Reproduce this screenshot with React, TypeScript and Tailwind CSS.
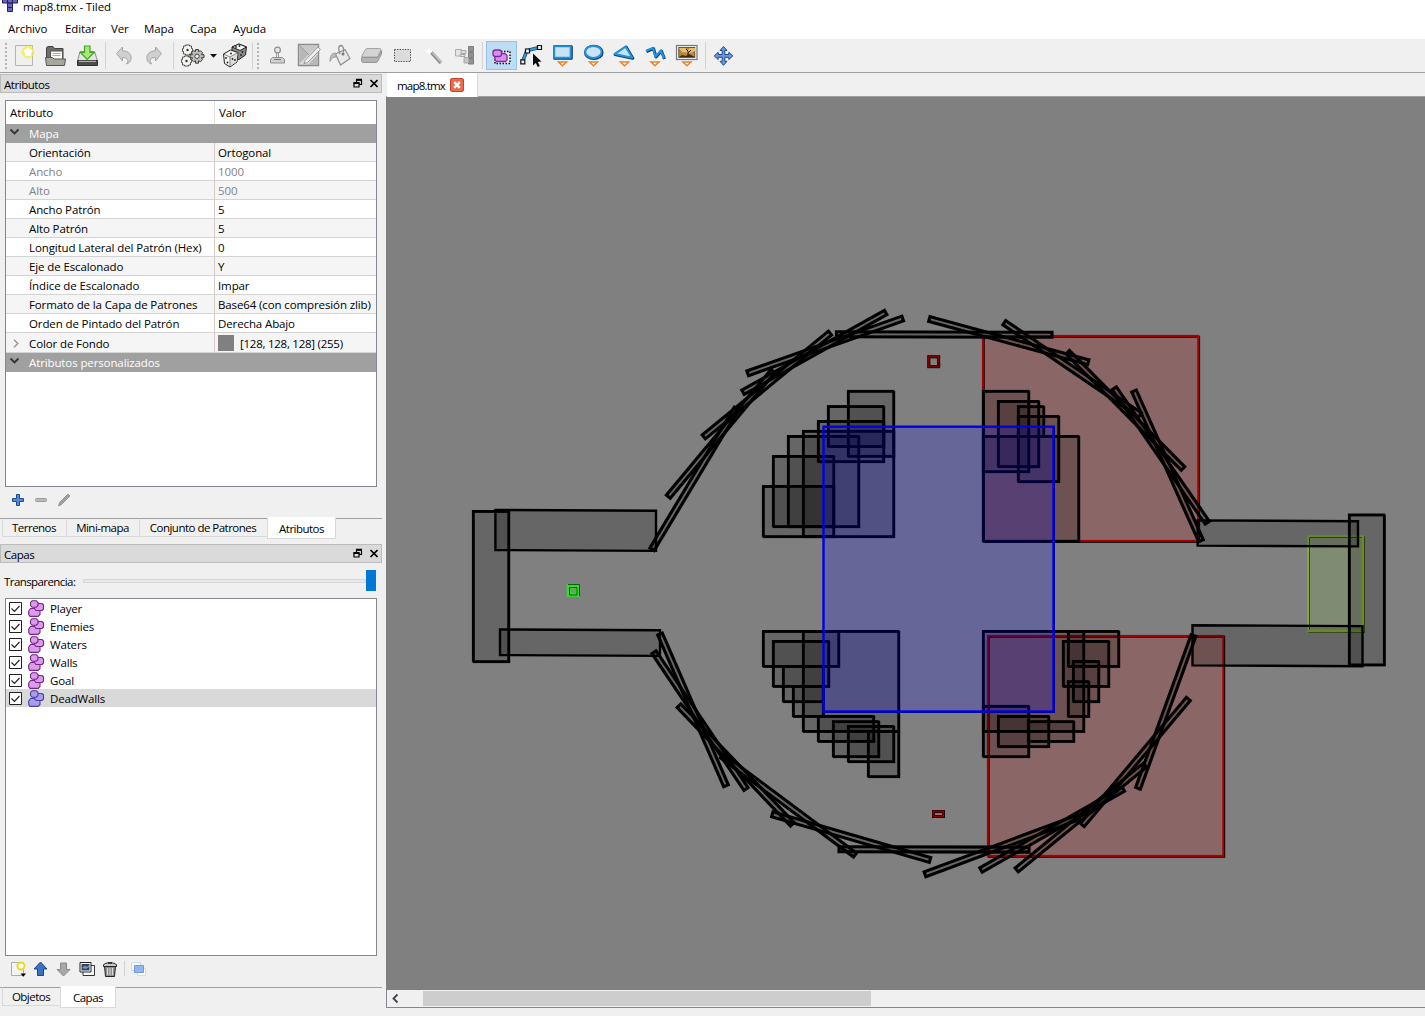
import React from "react";

type Kids = { children?: React.ReactNode };

/* ---------- toolbar icons ---------- */

const Icon = ({ ml, children }: Kids & { ml: string }) => (
  <svg className={`${ml} block h-[27px] w-[26px] shrink-0`} viewBox="0 0 26 27" fill="none">
    {children}
  </svg>
);

const Sep = ({ ml }: { ml: string }) => <div className={`${ml} h-[27px] w-px shrink-0 bg-[#d2d2d2]`} />;

const Grip = ({ ml }: { ml: string }) => (
  <svg className={`${ml} block h-[27px] w-[3px] shrink-0`} viewBox="0 0 3 27">
    {[1, 5, 9, 13, 17, 21, 25].map((y) => (
      <rect key={y} x="0" y={y} width="2" height="2" fill="#b4b4b4" />
    ))}
  </svg>
);

const Down = () => <path d="M9.500 20h8l-4 3.800z" fill="#fff" stroke="#e8832c" strokeWidth="1.500" />;

const Dot = ({ x, y }: { x: number; y: number }) => <circle cx={x} cy={y} r="0.9" fill="#222" />;

function Toolbar() {
  return (
    <div className="flex h-[34px] shrink-0 items-start border-b border-[#a0a0a0] bg-[#f0f0f0] pt-[3px]">
      <Grip ml="ml-[5px]" />
      <Icon ml="ml-[3px]">
        <path d="M4.500 3.500h17v20h-17z" fill="#f0f0ec" stroke="#b4b4b4" />
        <circle cx="17" cy="10" r="6.300" fill="#f3ee3c" opacity=".75" />
        <circle cx="17" cy="10" r="3.600" fill="#fff" />
        <path d="M17 5.500l1.400 2.800 3 .5-2.200 2.200.5 3-2.700-1.300-2.700 1.300.5-3-2.200-2.200 3-.5z" fill="#fff" stroke="#fff" strokeLinejoin="round" />
      </Icon>
      <Icon ml="ml-[6px]">
        <path d="M3.500 19V5.500l1.500-1h5l1.500 2h8.500V19z" fill="#6d6f68" stroke="#43453f" />
        <path d="M7.500 9h12v9h-12z" fill="#fafafa" stroke="#555" />
        <path d="M9.500 11.500h8M9.500 13.500h8" stroke="#aaa" />
        <path d="M2.500 15.500h7l1.500 1.500h11.500l-1 6.500h-18z" fill="#a5a89a" stroke="#55574f" />
      </Icon>
      <Icon ml="ml-[5px]">
        <path d="M6 9.500h14.500l3 9.500h-20z" fill="#e4e4e4" stroke="#8b8b8b" />
        <path d="M3.500 18.500h20v5h-20z" fill="#4c4e4c" stroke="#303030" />
        <path d="M5 19.300h17" stroke="#c8c8c8" />
        <path d="M10.500 4h5.500v6.500h4l-6.800 7-6.700-7h4z" fill="#a6e876" stroke="#45a322" strokeWidth="1.200" />
      </Icon>
      <Sep ml="ml-[5px]" />
      <Icon ml="ml-[5px]">
        <path d="M5.500 11.500l6-6.500v3.800c6 0 9.500 4 8.500 8.500-.6 2.300-2 4-4.500 4.700 2.500-3.500 1.500-6.500-4-6.500v3.500z" fill="#d0d0d0" stroke="#a4a4a4" />
      </Icon>
      <Icon ml="ml-[3px]">
        <path d="M21.500 11.500l-6-6.500v3.800c-6 0-9.500 4-8.500 8.500.6 2.300 2 4 4.500 4.700-2.500-3.500-1.500-6.500 4-6.500v3.500z" fill="#d0d0d0" stroke="#a4a4a4" />
      </Icon>
      <Sep ml="ml-[7px]" />
      <Icon ml="ml-[6px]">
        <path d="M3.500 4h2V3h4v1h2v2.500h1v3h-1V12h-2v1h-4v-1h-2V9.500h-1v-3h1z" fill="#f4f4f0" stroke="#444" strokeWidth=".9" />
        <path d="M2.500 15h2v-1h4v1h2v2.500h1v3h-1V23h-2v1h-4v-1h-2v-2.500h-1v-3h1z" fill="#f4f4f0" stroke="#444" strokeWidth=".9" />
        <path d="M15.500 7.500h3v2l2-.8 2 2-1 2h2.500v3h-2.500l1 2-2 2-2-.8v2.300h-3v-2.300l-2 .8-2-2 1-2H10v-3h2.500l-1-2 2-2 2 .8z" fill="#bdbeb7" stroke="#3c3c3c" />
        <circle cx="17" cy="14.300" r="2.200" fill="#f0f0f0" stroke="#444" />
        <circle cx="7.500" cy="8" r="1.200" fill="#333" />
        <circle cx="6.500" cy="19" r="1.200" fill="#333" />
      </Icon>
      <svg className="ml-[4px] block h-[27px] w-[7px] shrink-0" viewBox="0 0 7 27">
        <path d="M0 12h7l-3.500 3.800z" fill="#111" />
      </svg>
      <Icon ml="ml-[5px]">
        <path d="M10 5l7-3 7.500 3-1 8-6.500 4.500-7-3z" fill="#888c88" stroke="#222" />
        <path d="M10 5l7-3 7.500 3-6.500 3.500z" fill="#f5f5f2" stroke="#222" />
        <path d="M1.500 12l7-4 7.500 2.500-1 9.500-7 5-5.500-3.500z" fill="#f5f5f2" stroke="#222" />
        <path d="M8.500 15.500l7-4-.7 8-6.300 4.500z" fill="#dcddd8" />
        <path d="M1.500 12l6.500 3 8-4.500M8 15v9.500" stroke="#555" strokeWidth=".7" />
        <Dot x={14} y={5} /><Dot x={17.500} y={4} /><Dot x={20.500} y={10} /><Dot x={19} y={13} />
        <Dot x={9} y={11.500} /><Dot x={4} y={16} /><Dot x={5.500} y={20.500} /><Dot x={10.500} y={17} /><Dot x={13} y={18} />
      </Icon>
      <Sep ml="ml-[4px]" />
      <Grip ml="ml-[4px]" />
      <Icon ml="ml-[4px]">
        <circle cx="13.500" cy="8" r="2.900" fill="#e6e6e6" stroke="#8f8f8f" strokeWidth="1.200" />
        <path d="M12.500 11v4M14.500 11v4" stroke="#999" />
        <path d="M8.500 15.500h10l2 2v3.500h-14v-3.500z" fill="#cfcfcf" stroke="#8f8f8f" />
        <path d="M10 17.500h7" stroke="#777" />
      </Icon>
      <Icon ml="ml-[6px]">
        <path d="M2.500 2.500h20v21h-20z" fill="#dadada" stroke="#8b8b8b" strokeWidth="1.400" />
        <path d="M3.500 3.500l9 9-9 9zM22 12v11H12z" fill="#b8b8b8" />
        <path d="M4 4h18l-9.500 9z" fill="#c8c8c8" />
        <path d="M3.500 3.500l9.500 9.500" stroke="#999" />
        <path d="M9 18.500l13-13.500 2.500 2.500L11.500 20.500l-3.500 1.200z" fill="#f0f0f0" stroke="#999" />
      </Icon>
      <Icon ml="ml-[5px]">
        <path d="M8.500 12l9.500-4.500 5 9-9.500 6.500z" fill="#e9e9e9" stroke="#909090" strokeWidth="1.200" />
        <path d="M13 12c-2-5-1.500-8.500 1-8.500s2.800 4 2.500 7" stroke="#8c8c8c" strokeWidth="1.300" />
        <circle cx="16" cy="12" r="1.500" fill="#777" />
        <path d="M8.500 11c-4 0-5.500 3-5.500 8.500l2.500-4 3.500-.5z" fill="#bcbcbc" stroke="#a0a0a0" />
      </Icon>
      <Icon ml="ml-[5px]">
        <path d="M9 6.500h12.500q2 0 1.200 1.800l-3 6.700h-14.200q-2-.2-1.200-1.700l2.700-5q1-1.800 2-1.800z" fill="#d4d4d4" stroke="#a5a5a5" />
        <path d="M4 14.500l-.4 3.500q0 2.500 1.500 2.500h12.500q1.500 0 2.300-1.500l3.600-7 .1-3.500-3.800 7h-14.300q-1.500 0-1.500-1z" fill="#b4b4b4" stroke="#949494" />
      </Icon>
      <Icon ml="ml-[5px]">
        <rect x="5.500" y="7.500" width="16" height="12" fill="#dcdcdc" stroke="#444" strokeDasharray="1.300 1.300" />
      </Icon>
      <Icon ml="ml-[7px]">
        <path d="M9.500 10.500l9.500 10.500" stroke="#8f8f8f" strokeWidth="3.400" />
        <path d="M10.500 10.500l9 10" stroke="#c8c8c8" strokeWidth="1.400" />
        <path d="M7 6v6M4 9h6" stroke="#fff" strokeWidth="1.500" />
      </Icon>
      <Icon ml="ml-[3px]">
        <path d="M4.500 7.500h6v6.500h-6z" fill="#e5e5e5" stroke="#aaa" />
        <path d="M10 8.500h5v3h-5zM9 12.500h5v2H9z" fill="#ddd" stroke="#a8a8a8" />
        <path d="M17.500 4.500h5v5h-5zM17.500 10.500h5v5h-5zM17.500 16.500h5v5.500h-5z" fill="#929292" stroke="#7d7d7d" />
        <path d="M13 15.500h4.500v5.500H13z" fill="#c5c5c5" stroke="#aaa" />
      </Icon>
      <Sep ml="ml-[5px]" />
      <div className="-mt-[1px] ml-[3px] flex h-[29px] w-[31px] shrink-0 border border-[#93c3ea] bg-[#bfdcf5] pt-px">
        <Icon ml="ml-[2px]">
          <rect x="6" y="8.500" width="15" height="12" fill="#e4eefa" stroke="#111" strokeDasharray="1.500 1.500" strokeWidth="1.500" />
          <path d="M11 10.500h5l2 2v4.500l-1.500 1.500h-9L6 17v-3.500z" fill="#dc8ef0" stroke="#7c2c96" strokeWidth="1.300" strokeLinejoin="round" />
          <rect x="4" y="7" width="8.500" height="6.500" rx="2.500" fill="#dc8ef0" stroke="#7c2c96" strokeWidth="1.300" />
        </Icon>
      </div>
      <Icon ml="ml-px">
        <path d="M4.500 19.500L9 8.500l12.500-3" stroke="#174d7c" strokeWidth="3.400" />
        <path d="M4.500 19.500L9 8.500l12.500-3" stroke="#2e9fe0" strokeWidth="1.800" />
        <path d="M2.800 17.800h4v4h-4zM7.500 7h4v4h-4zM19.500 3.500h4v4h-4z" fill="#eee" stroke="#111" strokeWidth="1.200" />
        <path d="M15 11.500v12l2.800-2.500 2 4 2-1-2-4 3.700-.5z" fill="#0b0b0b" />
      </Icon>
      <Icon ml="ml-[5px]">
        <rect x="5.700" y="4.700" width="16.500" height="11.500" stroke="#0b3760" strokeWidth="3.200" strokeLinejoin="round" />
        <rect x="5.200" y="4.200" width="16.500" height="11.500" fill="#c9e2f5" stroke="#1f93dc" strokeWidth="2" strokeLinejoin="round" />
        <Down />
      </Icon>
      <Icon ml="ml-[6px]">
        <ellipse cx="12.800" cy="10.400" rx="8.200" ry="6" stroke="#0b3760" strokeWidth="3.200" />
        <ellipse cx="12.400" cy="9.900" rx="8.200" ry="6" fill="#c9e2f5" stroke="#1f93dc" strokeWidth="2" />
        <g transform="translate(-1 0)"><Down /></g>
      </Icon>
      <Icon ml="ml-[4px]">
        <path d="M15.200 5.200l6.500 11-17.500-3.700z" stroke="#0b3760" strokeWidth="3.200" strokeLinejoin="round" />
        <path d="M14.700 4.700l6.500 11-17.500-3.700z" fill="#c9e2f5" stroke="#1f93dc" strokeWidth="2" strokeLinejoin="round" />
        <Down />
      </Icon>
      <Icon ml="ml-[6px]">
        <path d="M3.500 9.500l7-3 2.500 8.500 5.500-6 3 8" stroke="#0b3760" strokeWidth="3" strokeLinejoin="round" />
        <path d="M3 9l7-3 2.500 8.500 5.500-6 3 8" stroke="#1f93dc" strokeWidth="2.200" strokeLinejoin="round" />
        <g transform="translate(-1.500 0)"><Down /></g>
      </Icon>
      <Icon ml="ml-[5px]">
        <rect x="2.500" y="3.500" width="20.500" height="14" fill="#f2f2f2" stroke="#777" strokeWidth="1.200" />
        <rect x="4.800" y="5.500" width="16" height="10" fill="#b98b36" stroke="#444" strokeWidth=".8" />
        <path d="M5 15l3-2 4 1 3-2 6 3z" fill="#3b2c12" />
        <path d="M5 6h6l2 3 3-3h5v3l-5 2-8-1z" fill="#e8c069" />
        <path d="M14 15V9l-2-2M14 11l3-3" stroke="#2b200e" />
        <g transform="translate(-.5 0)"><Down /></g>
      </Icon>
      <Sep ml="ml-[5px]" />
      <Icon ml="ml-[4px]">
        <path d="M13.500 4.500l3.500 4h-2.200v4h4V10.300l4 3.600-4 3.600v-2.200h-4v4H17l-3.500 4-3.500-4h2.200v-4h-4v2.200l-4-3.600 4-3.600v2.200h4v-4H10z" fill="#6c9ad8" stroke="#1d4689" />
      </Icon>
    </div>
  );
}

/* ---------- docks ---------- */

const DockTitle = ({ children }: Kids) => (
  <div className="flex h-[19px] w-[382px] shrink-0 items-center border border-[#bcbcbc] bg-[#dadada] pl-[3px]">
    <span className="grow pt-[2px] tracking-[-0.040em]">{children}</span>
    <svg className="h-[17px] w-[28px]" viewBox="0 0 28 17" fill="none" stroke="#000">
      <path d="M4 8h5v4h-5zM6.500 7.500V5h5v4.500H9.500" strokeWidth="1.200" />
      <path d="M6 4.800h6M3.500 8h6" strokeWidth="1.900" />
      <path d="M20.500 5l7 7M27.500 5l-7 7" strokeWidth="1.700" />
    </svg>
    <span className="w-[3px]" />
  </div>
);

const rows: { name: string; value: string; off?: boolean }[] = [
  { name: "Orientación", value: "Ortogonal" },
  { name: "Ancho", value: "1000", off: true },
  { name: "Alto", value: "500", off: true },
  { name: "Ancho Patrón", value: "5" },
  { name: "Alto Patrón", value: "5" },
  { name: "Longitud Lateral del Patrón (Hex)", value: "0" },
  { name: "Eje de Escalonado", value: "Y" },
  { name: "Índice de Escalonado", value: "Impar" },
  { name: "Formato de la Capa de Patrones", value: "Base64 (con compresión zlib)" },
  { name: "Orden de Pintado del Patrón", value: "Derecha Abajo" },
];

const Group = ({ children }: Kids) => (
  <div className="flex h-[19px] items-center bg-[#a0a0a0] text-white">
    <svg className="mb-[3px] ml-[3px] h-[8px] w-[11px]" viewBox="0 0 11 8" fill="none" stroke="#333" strokeWidth="1.800">
      <path d="M1.500 1.500l4 4 4-4" />
    </svg>
    <span className="ml-[9px]">{children}</span>
  </div>
);

function Attributes() {
  return (
    <div className="ml-[5px] mt-[7px] h-[387px] w-[372px] shrink-0 border border-[#828790] bg-white">
      <div className="flex h-[23px] items-center">
        <span className="w-[208px] pl-[4px]">Atributo</span>
        <span className="flex h-full items-center border-l border-[#e2e2e2] pl-[4px]">Valor</span>
      </div>
      <Group>Mapa</Group>
      {rows.map((r, i) => (
        <div
          key={r.name}
          className={`flex h-[19px] border-b border-[#d4d4d4] ${i % 2 === 0 ? "bg-[#f5f5f5]" : "bg-white"} ${r.off ? "text-[#838383]" : "text-black"}`}
        >
          <span className="flex w-[209px] shrink-0 items-center whitespace-nowrap border-r border-[#d4c8c8] pl-[23px] pt-[2px]">{r.name}</span>
          <span className="flex items-center whitespace-nowrap pl-[3px] pt-[2px]">{r.value}</span>
        </div>
      ))}
      <div className="flex h-[20px] border-b border-[#d4d4d4] bg-[#f5f5f5]">
        <span className="flex w-[209px] shrink-0 items-center border-r border-[#d4c8c8] pt-[2px]">
          <svg className="ml-[6px] mr-[9px] h-[9px] w-[8px]" viewBox="0 0 8 9" fill="none" stroke="#999" strokeWidth="1.500">
            <path d="M2 .8l3.800 3.700L2 8.200" />
          </svg>
          Color de Fondo
        </span>
        <span className="flex items-center pl-[3px]">
          <span className="mr-[6px] h-[16px] w-[16px] bg-[#808080]" />
          <span className="pt-[2px] tracking-[-0.022em]">[128, 128, 128] (255)</span>
        </span>
      </div>
      <Group>Atributos personalizados</Group>
    </div>
  );
}

const Tab = ({ on, w, children }: Kids & { on?: boolean; w: string }) => (
  <div
    className={`${w} shrink-0 whitespace-nowrap border text-center tracking-[-0.045em] ${
      on ? "-mt-px h-[22px] border-[#d9d9d9] border-t-white bg-white leading-[22px]" : "h-[19px] border-l-[#d9d9d9] border-b-[#d9d9d9] border-r-transparent border-t-[#a0a0a0] leading-[18px]"
    }`}
  >
    {children}
  </div>
);

const Blobs = ({ fill, line }: { fill: string; line: string }) => (
  <svg className="ml-[6px] h-[17px] w-[17px]" viewBox="0 0 17 17" fill={fill} stroke={line} strokeWidth="1.100" strokeLinejoin="round">
    <path d="M9.500 3.500h4.500l1.500 1.500v4l-1.500 1.500H7.500L6.300 9.500V6.500z" />
    <path d="M2.500 8.500h4l1.500 2h4v4l-1.800 1.900H2L.700 14.500V11z" />
    <path d="M4 .8h4.500l1.500 1.500v3.200L8.300 7.200H4L2.500 5.500v-3z" />
  </svg>
);

const layers = ["Player", "Enemies", "Waters", "Walls", "Goal", "DeadWalls"];

function Layers() {
  return (
    <div className="ml-[5px] h-[358px] w-[372px] shrink-0 border border-[#828790] bg-white">
      {layers.map((l) => (
        <div key={l} className={`flex h-[18px] items-center ${l === "DeadWalls" ? "bg-[#d9d9d9]" : ""}`}>
          <svg className="ml-[3px] h-[13px] w-[13px]" viewBox="0 0 13 13" fill="#fff" stroke="#222">
            <path d="M.5.500h12v12H.500z" />
            <path d="M2.500 6.500l3 3 5-5.500" fill="none" strokeWidth="1.200" />
          </svg>
          {l === "DeadWalls" ? <Blobs fill="#a99bf0" line="#4b3f9a" /> : <Blobs fill="#df98ee" line="#702a80" />}
          <span className="ml-[5px] pt-px tracking-[-0.015em]">{l}</span>
        </div>
      ))}
    </div>
  );
}

function LayerTools() {
  return (
    <div className="flex h-[31px] shrink-0 items-start pl-[10px] pt-[4px]">
      <svg className="h-[18px] w-[137px]" viewBox="0 0 137 18" fill="none">
        <path d="M1.500 2.500h12v13h-12z" fill="#f4f4f0" stroke="#aaa" />
        <circle cx="11" cy="6" r="3.500" fill="#fff" stroke="#ecdc20" strokeWidth="2" />
        <path d="M10.500 13.500h5.500l-2.700 3.200z" fill="#000" />
        <path d="M30.500 2l6.500 7h-3.500v6.500h-6V9H24z" fill="#3a72c0" stroke="#1e4687" />
        <path d="M53.500 16L47 9.500h3.500V3h6v6.500H60z" fill="#a8a8a8" stroke="#8a8a8a" />
        <path d="M73 5.500h11.500v10H73z" fill="#fff" stroke="#333" />
        <path d="M70 2.500h11v9.500H70z" fill="#fff" stroke="#222" />
        <path d="M71.500 4h8v6.500h-8z" fill="#2e4560" />
        <path d="M72 8l3-2.500 2 1.500 2-2v2l-3 2z" fill="#7e9abb" />
        <path d="M94.500 6h11l-1 10.500h-9z" fill="#8d918c" stroke="#222" />
        <path d="M97.500 8v7M100 8v7M102.500 8v7" stroke="#ddd" />
        <path d="M93.500 5c1-3 12-3 13 0v1.500h-13z" fill="#c8cac6" stroke="#222" />
        <path d="M98 3h4" stroke="#222" strokeWidth="1.500" />
        <path d="M114.500 1v15" stroke="#d0d0d0" />
        <path d="M121.500 2.500h9v8h-9z" fill="#fff" stroke="#cfdcf0" />
        <path d="M127.500 8.500h8v7h-8z" fill="#fff" stroke="#cfdcf0" />
        <path d="M124.500 5.500h9v7h-9z" fill="#8fb6ee" stroke="#6d9be0" />
      </svg>
    </div>
  );
}

/* ---------- map ---------- */

type Box = [number, number, number, number];

const waters: Box[] = [
  [983.3, 336.3, 1198.6, 541.3],
  [988.3, 636.3, 1223.7, 856.3],
];

const walls: Box[] = [
  [848.3, 391.3, 893.7, 456.3], [828.3, 406.5, 883.7, 446.5], [818.3, 421.4, 883.7, 461.6],
  [803.3, 431.3, 893.7, 536.6], [788.3, 436.4, 858.7, 526.6], [773.3, 456.4, 833.7, 526.6],
  [763.3, 486.4, 833.7, 536.6],
  [983.3, 391.3, 1028.7, 471.6], [998.3, 401.4, 1038.7, 466.6], [1018.3, 406.6, 1043.7, 436.4],
  [1018.3, 416.4, 1058.7, 481.6], [983.3, 436.4, 1078.7, 541.3],
  [763.3, 631.4, 838.7, 666.4], [773.3, 641.4, 828.7, 686.4], [783.3, 666.4, 823.3, 701.6],
  [793.3, 686.4, 823.3, 716.4], [803.3, 631.4, 898.7, 731.4], [818.3, 716.4, 873.7, 741.4],
  [833.3, 721.6, 878.7, 756.6], [848.3, 726.4, 893.7, 761.6], [868.3, 731.4, 898.7, 776.6],
  [983.3, 631.4, 1083.7, 731.4], [1068.3, 631.4, 1118.7, 666.4], [1063.3, 641.4, 1108.7, 686.4],
  [1073.3, 661.4, 1098.7, 701.6], [1068.3, 681.6, 1088.7, 716.4], [983.3, 706.3, 1028.7, 756.6],
  [998.3, 716.4, 1048.7, 746.6], [1028.3, 721.6, 1073.7, 741.4],
  [1349.3, 514.9, 1384.3, 664.9], [473.3, 511.4, 508.7, 661.6],
];

const tilted: Box[] = [
  [1197.6, 520.8, 1358, 546], [1192.5, 625.7, 1362.5, 665.8],
  [495.4, 510.3, 656, 550.5], [500, 629.9, 660, 655.5],
];

const bars: Box[] = [
  [652, 549.3, 736.5, 408.5], [668.3, 496.7, 773, 371], [703.8, 437, 830, 333],
  [743, 392.3, 885.7, 312.5], [747.7, 373.3, 902.7, 318.5],
  [836.5, 334.3, 1052, 334.8],
  [929.3, 319, 1088.3, 362.3], [1004.3, 322.7, 1140, 415], [1067.7, 352.3, 1183, 468.5],
  [1114.3, 388.3, 1207.3, 522.7], [1134, 391, 1201, 540.7],
  [660, 634, 726, 785.7], [654, 652.3, 746, 789], [679, 705.7, 792.3, 824.3],
  [722, 756, 855, 855], [772.3, 814.3, 930, 860],
  [839, 849.3, 1029, 849.6],
  [925, 874.3, 1079, 817], [981, 870, 1123.3, 789], [1016.7, 870, 1145, 765],
  [1082.3, 825, 1188.3, 699], [1138, 788.3, 1193.5, 635.5],
];

const Rect = ({ b, color, fill }: { b: Box; color: string; fill?: string }) => {
  const [x1, y1, x2, y2] = b;
  return (
    <g strokeWidth="2">
      <rect x={x1 + 0.5} y={y1 + 0.5} width={x2 - x1} height={y2 - y1} fill="none" stroke="#000" />
      <rect x={x1 - 0.4} y={y1 - 0.4} width={x2 - x1} height={y2 - y1} fill={fill ?? color} fillOpacity=".2" stroke={color} />
    </g>
  );
};

const Bar = ({ b }: { b: Box }) => {
  const [x1, y1, x2, y2] = b;
  const len = Math.hypot(x2 - x1, y2 - y1);
  const deg = (Math.atan2(y2 - y1, x2 - x1) * 180) / Math.PI;
  return (
    <rect
      x="0" y="-2.500" width={len} height="5"
      transform={`translate(${x1} ${y1}) rotate(${deg})`}
      fill="#000" fillOpacity=".2" stroke="#000" strokeWidth="3.100"
    />
  );
};

function MapView() {
  return (
    <svg className="block h-[893px] w-[1039px] shrink-0 bg-[#808080]" viewBox="386 97 1039 893">
      {waters.map((b, i) => <Rect key={i} b={b} color="#a80000" fill="#b40000" />)}
      <rect x="1309" y="537" width="55.500" height="95.300" fill="none" stroke="#1c2608" strokeWidth="1" />
      <rect x="1308.500" y="536.500" width="54.500" height="94.500" fill="#80b840" fillOpacity=".2" stroke="#84ad34" strokeWidth="2.600" />
      <path d="M1361.500 537.500h-52V629.500" fill="none" stroke="#26350c" strokeWidth=".8" />
      {walls.map((b, i) => <Rect key={i} b={b} color="#000" />)}
      {tilted.map(([x1, y1, x2, y2], i) => (
        <path
          key={i}
          d={`M${x1} ${y1 - 0.4}L${x2} ${y1 + 0.4}V${y2 + 0.4}L${x1} ${y2 - 0.4}z`}
          fill="#000" fillOpacity=".2" stroke="#000" strokeWidth="2.400"
        />
      ))}
      {bars.map((b, i) => <Bar key={i} b={b} />)}
      <rect x="823.500" y="426.500" width="231" height="286" fill="none" stroke="#00002a" />
      <rect x="823.500" y="426.700" width="230" height="284.800" fill="#0000ff" fillOpacity=".2" stroke="#0000e0" strokeWidth="2.400" />
      <g fill="none">
        <rect x="928.800" y="356.800" width="9.800" height="9.800" stroke="#260000" strokeWidth="3.200" />
        <rect x="928.500" y="356.500" width="9.800" height="9.800" stroke="#780000" strokeWidth="1.500" />
        <rect x="933.500" y="811.500" width="10" height="5" stroke="#260000" strokeWidth="3" fill="#a66" />
        <rect x="933.300" y="811.300" width="10" height="5" stroke="#850000" strokeWidth="1.400" />
        <rect x="568.500" y="586" width="9" height="9" stroke="#2be02b" strokeWidth="3.600" fill="#62a862" />
        <path d="M568 584.500h11.500V596M569.500 587.500h7.500v7.500h-7.500z" stroke="#0b4d0b" strokeWidth=".9" />
      </g>
    </svg>
  );
}

/* ---------- window ---------- */

export default function App() {
  return (
    <div className="flex h-[1016px] w-[1425px] flex-col overflow-hidden bg-[#f0f0f0] font-['Open_Sans','Noto_Sans',sans-serif] text-[11.500px] leading-[16px] tracking-[-0.010em] text-black">
      <div className="flex h-[17px] shrink-0 items-start bg-white">
        <svg className="ml-[2px] h-[13px] w-[17px]" viewBox="0 0 17 13" fill="#6464c4" stroke="#22224c">
          <path d="M.5-2h5v5h-5zM5.500-2h5v5h-5zM10.500-2h5v5h-5zM5.500 3h5v4.500h-5zM5.500 7.500h5v4h-5z" />
        </svg>
        <span className="-mt-px ml-[4px]">map8.tmx - Tiled</span>
      </div>
      <div className="flex h-[22px] shrink-0 items-center bg-white pl-[8px] pt-[2px]">
        <span className="w-[57px]">Archivo</span>
        <span className="w-[46px]">Editar</span>
        <span className="w-[33px]">Ver</span>
        <span className="w-[46px]">Mapa</span>
        <span className="w-[43px]">Capa</span>
        <span>Ayuda</span>
      </div>
      <Toolbar />
      <div className="flex h-[943px] shrink-0">
        <div className="flex w-[386px] shrink-0 flex-col pt-px">
          <DockTitle>Atributos</DockTitle>
          <Attributes />
          <div className="flex h-[31px] shrink-0 items-center pb-[5px] pl-[11px]">
            <svg className="h-[16px] w-[62px]" viewBox="0 0 62 16" fill="none">
              <path d="M5.500 2.500h3v4h4v3h-4v4h-3v-4h-4v-3h4z" fill="#4f8bd6" stroke="#1d4b8f" />
              <rect x="24.500" y="6.500" width="11" height="3" rx="1" fill="#bbb" stroke="#999" />
              <path d="M47.500 14l1-3.500L57 2l2 2-8.500 8.500z" fill="#a0a0a0" stroke="#8c8c8c" strokeWidth=".8" />
            </svg>
          </div>
          <div className="flex h-[26px] w-[382px] shrink-0 pl-[2px] shadow-[inset_0_1px_0_#a0a0a0]">
            <Tab w="w-[64px]">Terrenos</Tab>
            <Tab w="w-[73px]">Mini-mapa</Tab>
            <Tab w="w-[128px]">Conjunto de Patrones</Tab>
            <Tab on w="w-[69px]">Atributos</Tab>
          </div>
          <DockTitle>Capas</DockTitle>
          <div className="flex h-[35px] shrink-0 items-center pl-[4px]">
            <span className="mt-[2px] w-[79px] shrink-0 tracking-[-0.050em]">Transparencia:</span>
            <div className="h-[4px] w-[283px] border border-[#d6d6d6] bg-[#e7eaea]" />
            <div className="h-[21px] w-[10px] bg-[#0078d7]" />
          </div>
          <Layers />
          <LayerTools />
          <div className="flex h-[29px] w-[382px] shrink-0 pl-[2px] shadow-[inset_0_1px_0_#a0a0a0]">
            <Tab w="w-[58px]">Objetos</Tab>
            <Tab on w="w-[56px]">Capas</Tab>
          </div>
        </div>
        <div className="flex w-[1039px] shrink-0 flex-col">
          <div className="flex h-[24px] shrink-0 border-b border-[#a0a0a0]">
            <div className="ml-px flex h-[24px] w-[91px] shrink-0 items-center border-r border-[#d9d9d9] bg-white pl-[10px]">
              <span className="mt-[2px] w-[53px] tracking-[-0.070em]">map8.tmx</span>
              <svg className="h-[14px] w-[14px]" viewBox="0 0 14 14">
                <rect x=".5" y=".5" width="13" height="13" rx="1.500" fill="#ea6a4d" stroke="#c2452b" />
                <path d="M4.200 4.200l5.600 5.600M9.800 4.200l-5.600 5.600" stroke="#fff" strokeWidth="2.400" />
              </svg>
            </div>
          </div>
          <MapView />
          <div className="flex h-[18px] shrink-0 border-b border-l border-[#828790] bg-[#f0f0f0]">
            <svg className="h-[17px] w-[36px] shrink-0" viewBox="0 0 36 17" fill="none" stroke="#444" strokeWidth="1.800">
              <path d="M10.500 4.500L6.500 8.500l4 4" />
            </svg>
            <div className="mt-px h-[15px] w-[448px] bg-[#cdcdcd]" />
          </div>
        </div>
      </div>
      <div className="ml-[3px] mt-auto h-[6px] w-px shrink-0 bg-[#d0d0d0]" />
    </div>
  );
}
